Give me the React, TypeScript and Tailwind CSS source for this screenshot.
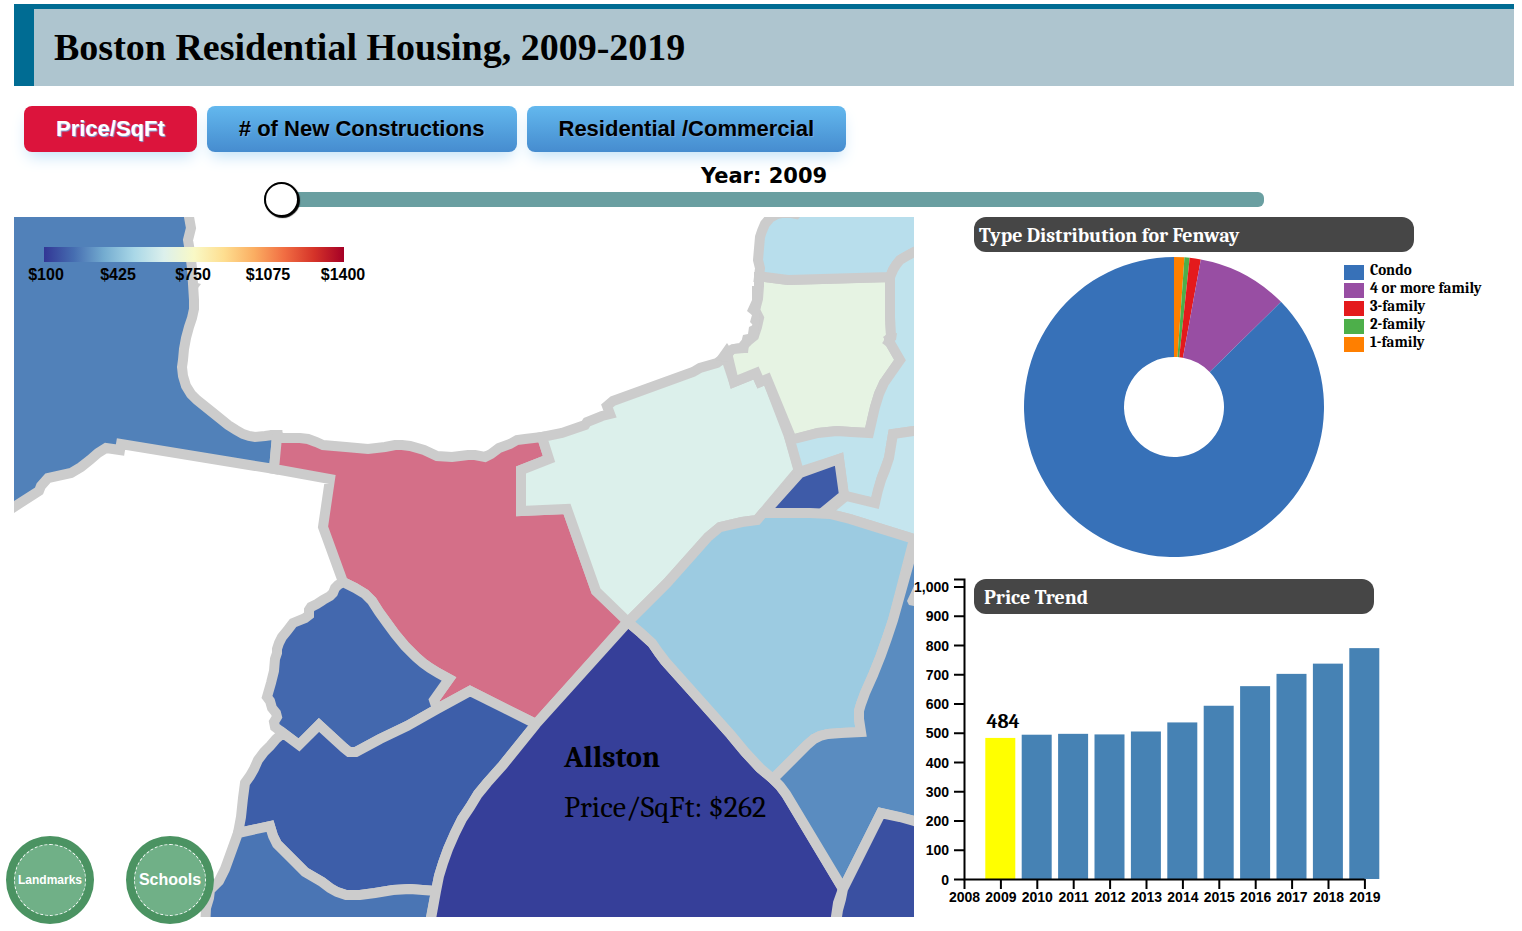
import { useState } from 'react';

const SERIF = "font-[Cambria,Caladea,'Noto_Serif','Liberation_Serif',serif]";
const SANS = "font-['Liberation_Sans',Arial,sans-serif]";

type Region = { name: string; fill: string; points: string };

const regions: Region[] = [
  {
    name: 'Charlestown north',
    fill: '#5181b9',
    points:
      '0,200 189,200 189,217 191,228 188,240 190,252 192,268 193,284 194,300 194,309 192,318 189,327 186,338 184,349 183,360 182,367 183,376 186,386 191,394 197,400 212,412 228,425 236,430 243,434 249,436 255,437 265,436 272,435 277,435 274,469 121,444 120,450 106,448 98,453 90,460 81,467 71,473 48,478 41,486 39,491 14,507 0,516',
  },
  {
    name: 'Fenway',
    fill: '#d46f88',
    points:
      '277,437 283,438 292,438 300,438 308,439 316,442 323,445 346,447 368,449 385,447 395,445 402,445 410,446 424,450 437,456 452,457 460,456 468,455 475,455 485,457 491,454 499,448 510,444 517,440 525,439 542,437 549,459 521,470 521,511 567,509 596,591 628,621 536,724 470,691 437,709 434,700 449,679 438,673 430,668 423,663 416,657 405,646 395,634 387,623 379,612 372,601 365,594 355,588 343,582 323,527 330,479 274,469',
  },
  {
    name: 'Mission Hill',
    fill: '#4368ae',
    points:
      '343,582 338,585 335,588 333,593 330,596 323,600 317,604 311,607 309,610 309,615 305,618 293,623 290,627 287,631 282,637 279,643 277,649 277,653 275,659 274,671 271,683 267,697 270,701 272,708 276,713 277,717 274,722 275,727 283,733 299,745 319,725 344,748 349,752 356,752 380,739 407,726 437,709 434,700 449,679 438,673 430,668 423,663 416,657 405,646 395,634 387,623 379,612 372,601 365,594 355,588',
  },
  {
    name: 'Jamaica Plain',
    fill: '#3d5ea9',
    points:
      '283,733 276,739 270,746 264,752 258,760 254,769 250,776 245,783 243,798 241,817 238,833 270,826 273,836 277,844 290,857 305,872 322,882 330,888 337,892 346,895 353,895 360,895 375,893 393,890 410,889 436,891 439,876 443,863 448,849 455,833 462,819 470,807 478,794 487,783 503,765 536,724 470,691 437,709 407,726 380,739 356,752 349,752 344,748 319,725 299,745',
  },
  {
    name: 'Roslindale',
    fill: '#4a75b4',
    points:
      '238,833 225,869 219,881 210,890 209,898 206,908 205,930 431,930 431,917 436,891 410,889 393,890 375,893 360,895 353,895 346,895 337,892 330,888 322,882 305,872 290,857 277,844 273,836 270,826',
  },
  {
    name: 'Allston',
    fill: '#363f99',
    points:
      '628,622 641,633 652,643 659,653 665,661 698,698 731,735 745,752 760,768 773,779 780,786 786,794 843,889 838,903 834,930 429,930 436,891 439,876 443,863 448,849 455,833 462,819 470,807 478,794 487,783 503,765 536,724',
  },
  {
    name: 'Back Bay',
    fill: '#dcf0eb',
    points:
      '542,437 562,433 585,425 587,422 602,416 610,414 607,406 613,401 693,372 700,368 717,363 728,355 728,364 734,382 756,373 760,382 767,379 790,439 799,470 757,520 742,522 720,527 708,537 667,583 628,622 596,591 567,509 521,511 521,470 549,459',
  },
  {
    name: 'Beacon Hill',
    fill: '#e6f3e3',
    points:
      '728,357 728,352 733,349 743,348 744,345 749,340 754,336 757,327 759,318 755,310 758,299 759,286 759,277 765,277 788,280 890,277 890,317 891,335 889,341 900,360 884,383 879,394 875,407 869,433 851,432 837,431 818,433 792,440 767,379 760,382 756,373 734,382',
  },
  {
    name: 'West End',
    fill: '#b8deec',
    points:
      '759,277 760,268 758,260 760,237 762,231 765,224 770,218 777,214 786,212 796,214 801,208 930,208 930,247 914,252 905,257 900,260 896,265 893,270 890,277 788,280 765,277',
  },
  {
    name: 'Downtown',
    fill: '#c0e3ed',
    points:
      '890,277 893,270 896,265 900,260 905,257 914,252 930,247 930,430 914,431 893,434 889,458 882,477 875,503 844,497 839,459 799,472 790,440 818,433 837,431 851,432 869,433 875,407 879,394 884,383 900,360 889,341 891,335 890,317',
  },
  {
    name: 'South Boston',
    fill: '#c5e5ee',
    points:
      '930,430 914,431 893,434 889,458 885,470 881,480 878,490 875,503 846,496 824,514 838,516 850,519 914,539 930,544',
  },
  {
    name: 'Bay Village',
    fill: '#3e5ba8',
    points: '800,473 839,459 844,495 821,514 764,513',
  },
  {
    name: 'South End',
    fill: '#9ccbe1',
    points:
      '628,622 667,583 708,537 720,527 742,522 757,520 763,513 810,513 830,514 838,516 850,519 914,539 893,620 887,638 881,655 873,675 865,693 861,704 859,711 859,719 861,732 841,733 828,734 820,736 814,739 807,745 773,779 760,768 745,752 731,735 698,698 665,661 659,653 652,643 641,633',
  },
  {
    name: 'Roxbury',
    fill: '#5a8cc0',
    points:
      '914,545 930,545 930,824 914,821 881,813 843,889 786,794 780,786 773,779 807,745 814,739 820,736 828,734 841,733 861,732 859,719 859,711 861,704 865,693 873,675 881,655 887,638 893,620',
  },
  {
    name: 'Dorchester',
    fill: '#3a50a1',
    points: '843,889 881,813 900,817 914,821 930,825 930,930 835,930 838,910 841,899',
  },
];

const slices = [
  { label: '1-family', color: '#ff7f00', from: 0, to: 4 },
  { label: '2-family', color: '#4daf4a', from: 4, to: 6 },
  { label: '3-family', color: '#e41a1c', from: 6, to: 10.3 },
  { label: '4 or more family', color: '#984ea3', from: 10.3, to: 45.5 },
  { label: 'Condo', color: '#3771b8', from: 45.5, to: 360 },
];

const trend = [484, 495, 498, 496, 506, 537, 594, 661, 703, 738, 791];
const tabs = ['Price/SqFt', '# of New Constructions', 'Residential /Commercial'];
const scaleLabels = [
  { x: 46, text: '$100' },
  { x: 118, text: '$425' },
  { x: 193, text: '$750' },
  { x: 268, text: '$1075' },
  { x: 343, text: '$1400' },
];
const scaleColors = [
  '#323695', '#466eb1', '#74acd0', '#a9d7e7', '#dcf0ec', '#f9f9c6',
  '#fede90', '#fbae62', '#f16e43', '#d53329', '#a50026',
];

function arc(from: number, to: number) {
  const at = (deg: number, r: number) => {
    const a = (deg * Math.PI) / 180;
    return `${150 + r * Math.sin(a)} ${150 - r * Math.cos(a)}`;
  };
  const large = to - from > 180 ? 1 : 0;
  return `M${at(from, 150)} A150 150 0 ${large} 1 ${at(to, 150)} L${at(to, 50)} A50 50 0 ${large} 0 ${at(from, 50)} Z`;
}

function HousingMap() {
  return (
    <svg viewBox="14 217 900 700" className="block h-auto w-full" role="img" aria-label="Map of price per square foot">
      <defs>
        <linearGradient id="scale">
          {scaleColors.map((c, i) => (
            <stop key={c} offset={i / 10} stopColor={c} />
          ))}
        </linearGradient>
      </defs>
      <g stroke="#ccc" strokeWidth="10">
        {regions.map((r) => (
          <polygon key={r.name} points={r.points} fill={r.fill} />
        ))}
      </g>
      <g fill="#ccc">
        <path d="M914 586 L907 601 L909 605 L914 606Z" />
        <path d="M715 360 L727 343 L729 346 L734 344 L741 343 L743 335 L748 334 L749 327 L753 325 L750 322 L752 315 L747 311 L752 300 L752 286 L762 286 L758 338 L749 344 L748 353 L735 353 L728 362Z" />
        <path d="M194 282 L201 284 L198 288Z" />
        <path d="M269 434 L270 430 L282 431 L283 434Z" />
        <path d="M886 335 L883 337 L885 340 L882 343 L886 346 L896 340 L897 333Z" />
      </g>
      <rect x="44" y="247" width="300" height="15" fill="url(#scale)" />
      <g className={`${SANS} text-[16px] font-bold`} textAnchor="middle">
        {scaleLabels.map((l) => (
          <text key={l.text} x={l.x} y="280">{l.text}</text>
        ))}
      </g>
      <g className={`${SERIF} text-[30px]`}>
        <text x="564" y="767" className="font-bold">Allston</text>
        <text x="564" y="817">Price/SqFt: $262</text>
      </g>
    </svg>
  );
}

function TrendChart({ year }: { year: number }) {
  const y = (v: number) => 879.5 - v * 0.2925;
  const x = (i: number) => 964.5 + i * 36.4;
  return (
    <svg viewBox="914 577 500 340" className="block h-auto w-5/6" role="img" aria-label="Price trend by year">
      {trend.map((v, i) => (
        <rect
          key={i}
          x={985.3 + i * 36.4}
          y={y(v)}
          width="30"
          height={879 - y(v)}
          fill={year === 2009 + i ? '#ff0' : '#4682b4'}
        />
      ))}
      <g stroke="#000" strokeWidth="2" fill="none">
        <path d="M954 579.5 H964.5 V879.5 H1364.5" />
        {Array.from({ length: 11 }, (_, i) => (
          <path key={i} d={`M954 ${y(i * 100)} H964`} />
        ))}
        {Array.from({ length: 12 }, (_, i) => (
          <path key={i} d={`M${x(i)} 879 V889`} />
        ))}
      </g>
      <g className={`${SANS} text-[14px] font-bold`}>
        {Array.from({ length: 11 }, (_, i) => (
          <text key={i} x="949" y={y(i * 100) + 5} textAnchor="end">
            {(i * 100).toLocaleString('en-US')}
          </text>
        ))}
        {Array.from({ length: 12 }, (_, i) => (
          <text key={i} x={x(i)} y="902" textAnchor="middle">{2008 + i}</text>
        ))}
      </g>
      <text
        x={1003 + (year - 2009) * 36.4}
        y={y(trend[year - 2009]) - 10}
        textAnchor="middle"
        className={`${SERIF} text-[20px] font-bold`}
      >
        {trend[year - 2009]}
      </text>
    </svg>
  );
}

function RoundButton({ label, size }: { label: string; size: string }) {
  return (
    <button
      type="button"
      className={`flex size-[72px] cursor-pointer items-center justify-center rounded-full border border-dashed border-white bg-[#70b087] font-bold text-white shadow-[0_0_0_8px_#4b9362] ${SANS} ${size}`}
    >
      {label}
    </button>
  );
}

export default function App() {
  const [active, setActive] = useState(0);
  const [year, setYear] = useState(2009);
  return (
    <div className="min-h-screen bg-white pt-1 pr-2 pb-3 pl-3.5 text-black">
      <header className="border-t-[5px] border-l-[20px] border-[#006c93] bg-[#aec5cf] px-5 pt-4 pb-[17px]">
        <h1 className="font-['Liberation_Serif','Times_New_Roman',serif] text-[38px] leading-[44px] font-bold">
          Boston Residential Housing, 2009-2019
        </h1>
      </header>

      <nav className="mt-5 flex flex-wrap gap-2.5 px-2.5">
        {tabs.map((t, i) => (
          <button
            key={t}
            type="button"
            onClick={() => setActive(i)}
            className={`h-[46px] cursor-pointer rounded-lg px-8 ${SANS} text-[22px] leading-[26px] font-bold shadow-[0_8px_16px_-4px_#bfe0f7] [text-shadow:1px_1px_1px_#7cacde] ${
              active === i ? 'bg-[#dc143c] text-white' : 'bg-linear-to-b from-[#63b8ee] to-[#468ccf] text-black'
            }`}
          >
            {t}
          </button>
        ))}
      </nav>

      <div className="mt-3 flex flex-col items-center">
        <label htmlFor="year" className="font-['DejaVu_Sans',sans-serif] text-[21px] leading-6 font-black">
          Year: {year}
        </label>
        <input
          id="year"
          type="range"
          min={2009}
          max={2019}
          value={year}
          onChange={(e) => setYear(Number(e.target.value))}
          className="mt-1 mb-2.5 block h-[15px] w-2/3 appearance-none rounded-md bg-[#6a9fa1] [&::-webkit-slider-thumb]:size-[35px] [&::-webkit-slider-thumb]:appearance-none [&::-webkit-slider-thumb]:rounded-full [&::-webkit-slider-thumb]:border-2 [&::-webkit-slider-thumb]:border-black [&::-webkit-slider-thumb]:bg-white [&::-webkit-slider-thumb]:shadow-[1px_1px_1px_#000]"
        />
      </div>

      <main className="grid grid-cols-[3fr_2fr]">
        <div className="relative">
          <HousingMap />
          <div className="absolute bottom-px left-0 flex gap-12">
            <RoundButton label="Landmarks" size="text-[12px]" />
            <RoundButton label="Schools" size="text-[16px]" />
          </div>
        </div>

        <div>
          <section className="pl-[60px]">
            <h2 className={`${SERIF} h-[35px] w-[440px] max-w-full rounded-xl bg-[#464646] px-[5px] text-[20px] leading-[38px] font-bold text-white`}>
              Type Distribution for Fenway
            </h2>
            <div className="mt-[5px] flex items-start gap-5 pl-[50px]">
              <svg viewBox="0 0 300 300" className="w-[300px] shrink-0" role="img" aria-label="Housing type distribution">
                {slices.map((s) => (
                  <path key={s.label} d={arc(s.from, s.to)} fill={s.color} />
                ))}
              </svg>
              <ul className="pt-1">
                {[...slices].reverse().map((s) => (
                  <li key={s.label} className="flex h-[18px] items-center gap-1.5">
                    <span className="mt-1 block h-[15px] w-5" style={{ backgroundColor: s.color }} />
                    <span className={`${SERIF} text-[15px] leading-[18px] font-bold whitespace-nowrap`}>{s.label}</span>
                  </li>
                ))}
              </ul>
            </div>
          </section>

          <section className="relative mt-5">
            <TrendChart year={year} />
            <h2 className={`${SERIF} absolute top-0.5 left-[60px] h-[35px] w-[400px] rounded-xl bg-[#464646] px-2.5 text-[20px] leading-[38px] font-bold text-white`}>
              Price Trend
            </h2>
          </section>
        </div>
      </main>
    </div>
  );
}
